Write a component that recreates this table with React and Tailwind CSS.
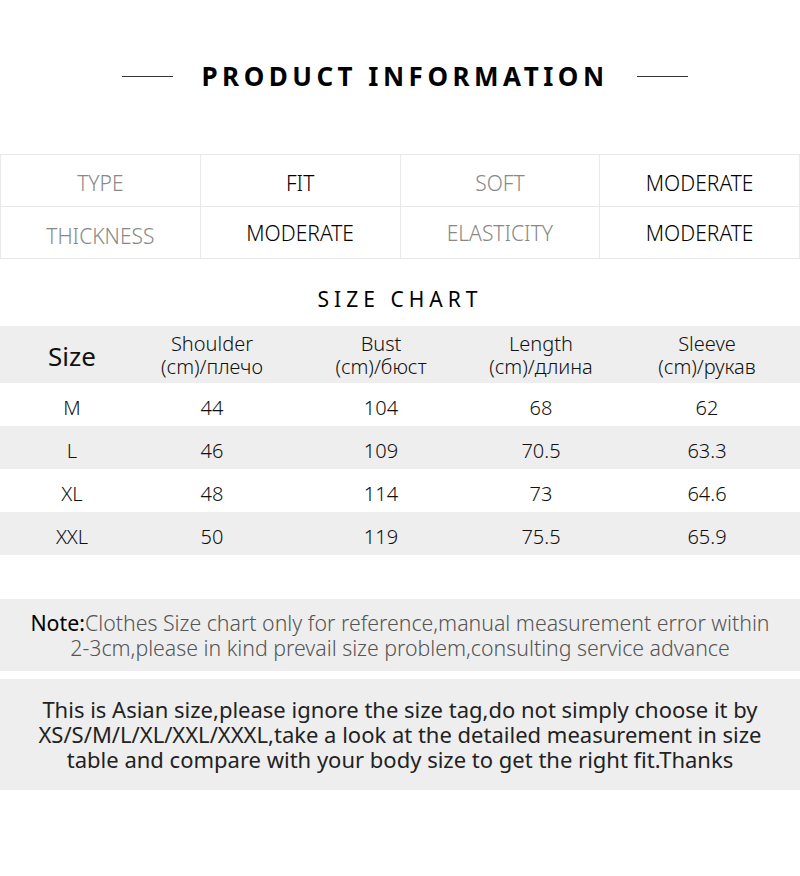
import React from "react";

const props1 = [
  [{ t: "TYPE", v: "FIT" }, { t: "SOFT", v: "MODERATE" }],
  [{ t: "THICKNESS", v: "MODERATE" }, { t: "ELASTICITY", v: "MODERATE" }],
];

const sizes = [
  ["M", "44", "104", "68", "62"],
  ["L", "46", "109", "70.5", "63.3"],
  ["XL", "48", "114", "73", "64.6"],
  ["XXL", "50", "119", "75.5", "65.9"],
];

const colW = ["w-[144px]", "w-[136px]", "w-[202px]", "w-[118px]", "w-[200px] pl-[14px]"];

export default function App() {
  return (
    <div className="w-[800px] h-[876px] bg-white text-[#111]" style={{ fontFamily: '"Noto Sans", "Open Sans", sans-serif' }}>
      {/* TITLE */}
      <div className="h-[154px] flex justify-center items-start pt-[59px]">
        <div className="flex items-center gap-[28px] pl-[10px]">
          <div className="w-[51px] h-px bg-[#333]" />
          <h1 className="text-[26px] leading-[34px] font-bold tracking-[4.5px] text-black">PRODUCT INFORMATION</h1>
          <div className="w-[51px] h-px bg-[#333]" />
        </div>
      </div>

      {/* PROPERTIES */}
      <div className="border-t border-l border-[#e8e8e8]">
        {props1.map((row, i) => (
          <div key={i} className="grid grid-cols-4">
            {row.map((c, j) => (
              <React.Fragment key={j}>
                <div className={`h-[52px] border-r border-b border-[#e8e8e8] flex items-center justify-center text-[21px] font-light text-[#888] ${i === 1 && j === 0 ? "pt-[9px]" : i === 0 ? "pt-[7px]" : "pt-[3px]"}`}>{c.t}</div>
                <div className={`h-[52px] border-r border-b border-[#e8e8e8] flex items-center justify-center text-[21px] font-light text-black ${i === 0 ? "pt-[7px]" : "pt-[3px]"}`}>{c.v}</div>
              </React.Fragment>
            ))}
          </div>
        ))}
      </div>

      {/* SIZE CHART */}
      <div className="h-[67px] flex justify-center pt-[26px]">
        <h2 className="text-[21px] leading-[28px] tracking-[5px] text-black">SIZE CHART</h2>
      </div>

      <div className="h-[57px] bg-[#eeeeee] flex items-center text-[20px] font-light leading-[23px]">
        <div className={`${colW[0]} text-center text-[26px] font-normal pt-[4px]`}>Size</div>
        <div className={`${colW[1]} text-center`}>Shoulder<br />(cm)/плечо</div>
        <div className={`${colW[2]} text-center`}>Bust<br />(cm)/бюст</div>
        <div className={`${colW[3]} text-center`}>Length<br />(cm)/длина</div>
        <div className={`${colW[4]} text-center`}>Sleeve<br />(cm)/рукав</div>
      </div>
      {sizes.map((r, i) => (
        <div key={r[0]} className={`h-[43px] flex items-center pt-[6px] text-[20px] font-light ${i % 2 === 1 ? "bg-[#eeeeee]" : "bg-white"}`}>
          {r.map((v, j) => (
            <div key={j} className={`${colW[j]} text-center`}>{v}</div>
          ))}
        </div>
      ))}

      {/* NOTES */}
      <div className="mt-[44px] h-[72px] bg-[#eeeeee] flex flex-col items-center justify-center text-[21.3px] leading-[25px] font-light text-[#555] text-center">
        <p><span className="text-black font-normal">Note:</span>Clothes Size chart only for reference,manual measurement error within</p>
        <p>2-3cm,please in kind prevail size problem,consulting service advance</p>
      </div>
      <div className="mt-[8px] h-[111px] bg-[#eeeeee] flex flex-col items-center justify-center text-[22px] leading-[25px] text-[#222] text-center">
        <p>This is Asian size,please ignore the size tag,do not simply choose it by</p>
        <p>XS/S/M/L/XL/XXL/XXXL,take a look at the detailed measurement in size</p>
        <p>table and compare with your body size to get the right fit.Thanks</p>
      </div>
    </div>
  );
}
